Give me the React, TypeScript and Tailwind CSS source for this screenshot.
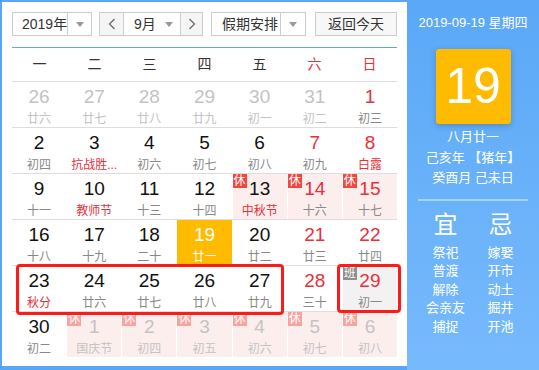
import React from "react";

type Day = {
  d: number;
  l: string;
  other?: boolean;
  fest?: boolean;
  badge?: "休" | "班";
  today?: boolean;
};

const weeks: Day[][] = [
  [
    { d: 26, l: "廿六", other: true },
    { d: 27, l: "廿七", other: true },
    { d: 28, l: "廿八", other: true },
    { d: 29, l: "廿九", other: true },
    { d: 30, l: "初一", other: true },
    { d: 31, l: "初二", other: true },
    { d: 1, l: "初三" },
  ],
  [
    { d: 2, l: "初四" },
    { d: 3, l: "抗战胜...", fest: true },
    { d: 4, l: "初六" },
    { d: 5, l: "初七" },
    { d: 6, l: "初八" },
    { d: 7, l: "初九" },
    { d: 8, l: "白露", fest: true },
  ],
  [
    { d: 9, l: "十一" },
    { d: 10, l: "教师节", fest: true },
    { d: 11, l: "十三" },
    { d: 12, l: "十四" },
    { d: 13, l: "中秋节", fest: true, badge: "休" },
    { d: 14, l: "十六", badge: "休" },
    { d: 15, l: "十七", badge: "休" },
  ],
  [
    { d: 16, l: "十八" },
    { d: 17, l: "十九" },
    { d: 18, l: "二十" },
    { d: 19, l: "廿一", today: true },
    { d: 20, l: "廿二" },
    { d: 21, l: "廿三" },
    { d: 22, l: "廿四" },
  ],
  [
    { d: 23, l: "秋分", fest: true },
    { d: 24, l: "廿六" },
    { d: 25, l: "廿七" },
    { d: 26, l: "廿八" },
    { d: 27, l: "廿九" },
    { d: 28, l: "三十" },
    { d: 29, l: "初一", badge: "班" },
  ],
  [
    { d: 30, l: "初二" },
    { d: 1, l: "国庆节", other: true, badge: "休" },
    { d: 2, l: "初四", other: true, badge: "休" },
    { d: 3, l: "初五", other: true, badge: "休" },
    { d: 4, l: "初六", other: true, badge: "休" },
    { d: 5, l: "初七", other: true, badge: "休" },
    { d: 6, l: "初八", other: true, badge: "休" },
  ],
];

const weekdays = ["一", "二", "三", "四", "五", "六", "日"];
const yi = ["祭祀", "普渡", "解除", "会亲友", "捕捉"];
const ji = ["嫁娶", "开市", "动土", "掘井", "开池"];

function Caret() {
  return <span className="w-0 h-0 border-x-4 border-x-transparent border-t-[5px] border-t-[#999]" />;
}

function Chevron({ dir }: { dir: "l" | "r" }) {
  return (
    <svg width="8" height="12" viewBox="0 0 8 12">
      <polyline
        points={dir === "l" ? "6.5,1 1.5,6 6.5,11" : "1.5,1 6.5,6 1.5,11"}
        fill="none"
        stroke="#666"
        strokeWidth="1.2"
      />
    </svg>
  );
}

function Cell({ day, col }: { day: Day; col: number }) {
  let bg = "";
  if (day.today) bg = "bg-[#ffbb00]";
  else if (day.badge === "休") bg = "bg-[#fdeeee]";
  else if (day.badge === "班") bg = "bg-[#f2f2f2]";

  let num = "text-[#111]";
  if (day.today) num = "text-white";
  else if (day.other) num = "text-[#c3c3c3]";
  else if (col >= 5) num = "text-[#e8303a]";

  let lunar = "text-[#888]";
  if (day.today) lunar = "text-white";
  else if (day.other) lunar = "text-[#c3c3c3]";
  else if (day.fest) lunar = "text-[#e8303a]";

  return (
    <div className={`relative flex flex-col items-center pt-[5px] ${bg}`}>
      {day.badge && (
        <span
          className={`absolute top-0 left-0 w-[14px] h-[14px] text-[12px] leading-[14px] text-center text-white ${
            day.badge === "班" ? "bg-[#8f8f8f]" : day.other ? "bg-[#f7a3a0]" : "bg-[#f2473f]"
          }`}
        >
          {day.badge}
        </span>
      )}
      <span className={`text-[19px] leading-[20px] ${num}`}>{day.d}</span>
      <span className={`mt-[4px] whitespace-nowrap text-[12px] leading-[16px] ${lunar}`}>{day.l}</span>
    </div>
  );
}

export default function App() {
  return (
    <div className="flex w-[539px] h-[370px] font-['Liberation_Sans','Noto_Sans_CJK_SC',sans-serif]">
      <div className="w-[407px] h-[370px] bg-white border-l-2 border-t-2 border-b-4 border-[#5aa6f6] px-[10px] pt-[10px]">
        {/* controls */}
        <div className="flex h-[24px] text-[14px] text-[#333] whitespace-nowrap">
          <div className="flex w-[80px] border border-[#ccc]">
            <span className="flex-1 pl-[9px] leading-[22px]">2019年</span>
            <span className="flex w-[25px] shrink-0 items-center justify-center border-l border-[#ccc]">
              <Caret />
            </span>
          </div>
          <div className="ml-[7px] flex w-[104px] border border-[#ccc]">
            <span className="flex w-[23px] items-center justify-center bg-[#f5f5f5]">
              <Chevron dir="l" />
            </span>
            <span className="flex flex-1 items-center justify-between border-x border-[#ccc] pl-[10px] pr-[7px]">
              <span className="leading-[22px]">9月</span>
              <Caret />
            </span>
            <span className="flex w-[21px] items-center justify-center bg-[#f5f5f5]">
              <Chevron dir="r" />
            </span>
          </div>
          <div className="ml-[8px] flex w-[95px] border border-[#ccc]">
            <span className="flex-1 pl-[10px] leading-[22px]">假期安排</span>
            <span className="flex w-[25px] shrink-0 items-center justify-center border-l border-[#ccc]">
              <Caret />
            </span>
          </div>
          <button className="ml-[9px] w-[82px] border border-[#ccc] bg-[#f7f7f7] leading-[22px] text-center">
            返回今天
          </button>
        </div>

        <div className="mt-[11px] h-px bg-[#5aa6f6]" />

        {/* calendar */}
        <div className="relative">
          <div className="grid h-[34px] grid-cols-7 items-center border-b border-[#ddd] text-center text-[14px]">
            {weekdays.map((w, i) => (
              <span key={w} className={i >= 5 ? "text-[#e8303a]" : "text-[#333]"}>
                {w}
              </span>
            ))}
          </div>
          {weeks.map((week, r) => (
            <div
              key={r}
              className={`grid grid-cols-7 gap-x-px ${
                r < weeks.length - 1 ? "h-[46px] border-b border-[#ddd]" : "h-[45px]"
              }`}
            >
              {week.map((day, c) => (
                <Cell key={c} day={day} col={c} />
              ))}
            </div>
          ))}

          {/* highlighted selections */}
          <div className="absolute left-[4px] top-[216px] w-[268px] h-[51px] border-[3px] border-[#ff1a1a] rounded-[4px]" />
          <div className="absolute left-[325px] top-[216px] w-[64px] h-[49px] border-[3px] border-[#ff1a1a] rounded-[4px]" />
        </div>
      </div>

      {/* side panel */}
      <div className="flex w-[132px] h-[370px] flex-col items-center bg-linear-to-b from-[#5aa8f7] to-[#77bafc] text-white">
        <div className="pt-[13px] text-[13px] leading-[20px]">2019-09-19 星期四</div>
        <div className="mt-[16px] flex h-[75px] w-[75px] items-center justify-center rounded-[3px] bg-[#ffbb00] text-[50px] shadow-[0_2px_6px_rgba(0,0,0,0.2)]">
          19
        </div>
        <div className="mt-[3px] text-center text-[13px] leading-[20.5px]">
          <div>八月廿一</div>
          <div>己亥年 【猪年】</div>
          <div>癸酉月 己未日</div>
        </div>
        <div className="mt-[10px] h-[2px] w-[110px] bg-white/40" />
        <div className="mt-[9px] flex">
          <div className="flex w-[55px] flex-col items-center">
            <div className="text-[24px] leading-[30px]">宜</div>
            <div className="mt-[4px] text-[13px] leading-[18.5px] text-center">
              {yi.map((t) => (
                <div key={t}>{t}</div>
              ))}
            </div>
          </div>
          <div className="flex w-[55px] flex-col items-center">
            <div className="text-[24px] leading-[30px]">忌</div>
            <div className="mt-[4px] text-[13px] leading-[18.5px] text-center">
              {ji.map((t) => (
                <div key={t}>{t}</div>
              ))}
            </div>
          </div>
        </div>
      </div>
    </div>
  );
}
